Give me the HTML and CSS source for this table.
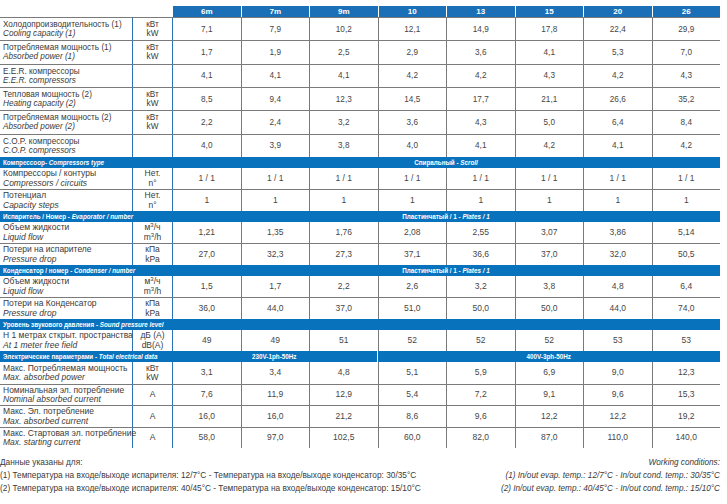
FILE: index.html
```html
<!DOCTYPE html>
<html lang="ru">
<head>
<meta charset="utf-8">
<title>Технические характеристики</title>
<link rel="stylesheet" href="styles.css">
</head>
<body>
<div class="page">
<table class="spec">
<colgroup>
<col class="c-label"><col class="c-unit">
<col class="c-val"><col class="c-val"><col class="c-val"><col class="c-val"><col class="c-val"><col class="c-val"><col class="c-val"><col class="c-val">
</colgroup>
<thead>
<tr class="head"><th class="blank"></th><th class="blank"></th><th>6m</th><th>7m</th><th>9m</th><th>10</th><th>13</th><th>15</th><th>20</th><th>26</th></tr>
</thead>
<tbody>
<tr class="big"><td class="lbl">Холодопроизводительность (1)<i>Cooling capacity (1)</i></td><td class="unit">кВт<br>kW</td><td>7,1</td><td>7,9</td><td>10,2</td><td>12,1</td><td>14,9</td><td>17,8</td><td>22,4</td><td>29,9</td></tr>
<tr class="big"><td class="lbl">Потребляемая мощность (1)<i>Absorbed power (1)</i></td><td class="unit">кВт<br>kW</td><td>1,7</td><td>1,9</td><td>2,5</td><td>2,9</td><td>3,6</td><td>4,1</td><td>5,3</td><td>7,0</td></tr>
<tr class="big"><td class="lbl">E.E.R. компрессоры<i>E.E.R. compressors</i></td><td class="unit"></td><td>4,1</td><td>4,1</td><td>4,1</td><td>4,2</td><td>4,2</td><td>4,3</td><td>4,2</td><td>4,3</td></tr>
<tr class="big"><td class="lbl">Тепловая мощность (2)<i>Heating capacity (2)</i></td><td class="unit">кВт<br>kW</td><td>8,5</td><td>9,4</td><td>12,3</td><td>14,5</td><td>17,7</td><td>21,1</td><td>26,6</td><td>35,2</td></tr>
<tr class="big"><td class="lbl">Потребляемая мощность (2)<i>Absorbed power (2)</i></td><td class="unit">кВт<br>kW</td><td>2,2</td><td>2,4</td><td>3,2</td><td>3,6</td><td>4,3</td><td>5,0</td><td>6,4</td><td>8,4</td></tr>
<tr class="big"><td class="lbl">C.O.P. компрессоры<i>C.O.P. compressors</i></td><td class="unit"></td><td>4,0</td><td>3,9</td><td>3,8</td><td>4,0</td><td>4,1</td><td>4,2</td><td>4,1</td><td>4,2</td></tr>

<tr class="sect"><td colspan="2">Компрессоор- <i>Compressors type</i></td><td colspan="8" class="mid">Спиральный - <i>Scroll</i></td></tr>
<tr><td class="lbl">Компрессоры / контуры<i>Compressors / circuits</i></td><td class="unit">Нет.<br>n°</td><td>1 / 1</td><td>1 / 1</td><td>1 / 1</td><td>1 / 1</td><td>1 / 1</td><td>1 / 1</td><td>1 / 1</td><td>1 / 1</td></tr>
<tr><td class="lbl">Потенциал<i>Capacity steps</i></td><td class="unit">Нет.<br>n°</td><td>1</td><td>1</td><td>1</td><td>1</td><td>1</td><td>1</td><td>1</td><td>1</td></tr>

<tr class="sect"><td colspan="2">Испаритель / Номер - <i>Evaporator / number</i></td><td colspan="8" class="mid">Пластинчатый / 1 - <i>Plates / 1</i></td></tr>
<tr><td class="lbl">Объем жидкости<i>Liquid flow</i></td><td class="unit">м<sup>3</sup>/ч<br>m<sup>3</sup>/h</td><td>1,21</td><td>1,35</td><td>1,76</td><td>2,08</td><td>2,55</td><td>3,07</td><td>3,86</td><td>5,14</td></tr>
<tr><td class="lbl">Потери на испарителе<i>Pressure drop</i></td><td class="unit">кПа<br>kPa</td><td>27,0</td><td>32,3</td><td>27,3</td><td>37,1</td><td>36,6</td><td>37,0</td><td>32,0</td><td>50,5</td></tr>

<tr class="sect"><td colspan="2">Конденсатор / номер - <i>Condenser / number</i></td><td colspan="8" class="mid">Пластинчатый / 1 - <i>Plates / 1</i></td></tr>
<tr><td class="lbl">Объем жидкости<i>Liquid flow</i></td><td class="unit">м<sup>3</sup>/ч<br>m<sup>3</sup>/h</td><td>1,5</td><td>1,7</td><td>2,2</td><td>2,6</td><td>3,2</td><td>3,8</td><td>4,8</td><td>6,4</td></tr>
<tr><td class="lbl">Потери на Конденсатор<i>Pressure drop</i></td><td class="unit">кПа<br>kPa</td><td>36,0</td><td>44,0</td><td>37,0</td><td>51,0</td><td>50,0</td><td>50,0</td><td>44,0</td><td>74,0</td></tr>

<tr class="sect"><td colspan="10">Уровень звукового давления - <i>Sound pressure level</i></td></tr>
<tr><td class="lbl">Н 1 метрах сткрыт. пространства<i>At 1 meter free field</i></td><td class="unit">дБ (А)<br>dB(A)</td><td>49</td><td>49</td><td>51</td><td>52</td><td>52</td><td>52</td><td>53</td><td>53</td></tr>

<tr class="sect"><td colspan="2">Электрические параметрами - <i>Total electrical data</i></td><td colspan="3" class="mid split">230V-1ph-50Hz</td><td colspan="5" class="mid">400V-3ph-50Hz</td></tr>
<tr><td class="lbl">Макс. Потребляемая мощность<i>Max. absorbed power</i></td><td class="unit">кВт<br>kW</td><td>3,1</td><td>3,4</td><td>4,8</td><td>5,1</td><td>5,9</td><td>6,9</td><td>9,0</td><td>12,3</td></tr>
<tr><td class="lbl">Номинальная эл. потребление<i>Nominal absorbed current</i></td><td class="unit">A</td><td>7,6</td><td>11,9</td><td>12,9</td><td>5,4</td><td>7,2</td><td>9,1</td><td>9,6</td><td>15,3</td></tr>
<tr><td class="lbl">Макс. Эл. потребление<i>Max. absorbed current</i></td><td class="unit">A</td><td>16,0</td><td>16,0</td><td>21,2</td><td>8,6</td><td>9,6</td><td>12,2</td><td>12,2</td><td>19,2</td></tr>
<tr><td class="lbl">Макс. Стартовая эл. потребление<i>Max. starting current</i></td><td class="unit">A</td><td>58,0</td><td>97,0</td><td>102,5</td><td>60,0</td><td>82,0</td><td>87,0</td><td>110,0</td><td>140,0</td></tr>
</tbody>
</table>

<div class="notes">
<div class="notes-ru">
<p>Данные указаны для:</p>
<p>(1) Температура на входе/выходе испарителя: 12/7°C - Температура на входе/выходе конденсатор: 30/35°C</p>
<p>(2) Температура на входе/выходе испарителя: 40/45°C - Температура на входе/выходе конденсатор: 15/10°C</p>
</div>
<div class="notes-en">
<p>Working conditions:</p>
<p>(1) In/out evap. temp.: 12/7°C - In/out cond. temp.: 30/35°C</p>
<p>(2) In/out evap. temp.: 40/45°C - In/out cond. temp.: 15/10°C</p>
</div>
</div>
</div>
</body>
</html>
```
FILE: styles.css
```css
html, body {
  margin: 0;
  padding: 0;
  background: #ffffff;
}

.page {
  width: 720px;
  padding-top: 6px;
  font-family: "Liberation Sans", Arial, sans-serif;
  color: #3a3a3a;
}

.spec {
  width: 720px;
  table-layout: fixed;
  border-collapse: separate;
  border-spacing: 0;
  font-size: 8.5px;
}

.c-label { width: 132px; }
.c-unit { width: 40px; }
.c-val { width: 68.5px; }

.spec th,
.spec td {
  padding: 0;
  vertical-align: middle;
}

.head {
  height: 11px;
}

.head th {
  background: #1b6fb7;
  color: #ffffff;
  font-weight: bold;
  font-size: 8px;
  line-height: 11px;
  text-align: center;
  border-left: 1px solid #ffffff;
}

.head th.blank {
  background: transparent;
  border-left: 0;
}

.spec tbody td {
  border-top: 1px solid #7a7a7a;
  border-left: 1px solid #7a7a7a;
  text-align: center;
  color: #464646;
  line-height: 9.5px;
}

.spec tbody tr {
  height: 21.5px;
}

.spec tbody tr.big {
  height: 23.33px;
  font-size: 8.2px;
}

.spec tbody tr.big td {
  line-height: 9px;
}

.spec tbody td.lbl {
  border-left: 0;
  text-align: left;
  padding-left: 3px;
  color: #3a3a3a;
  white-space: nowrap;
}

.spec tbody td.lbl i {
  display: block;
}

.spec tbody td.unit {
  border-left: 1px solid #2b72b6;
  color: #3a3a3a;
  white-space: nowrap;
}

.spec tbody td.unit + td {
  border-left: 1px solid #2b72b6;
}

.spec sup {
  font-size: 6px;
  line-height: 0;
  vertical-align: 3px;
}

.spec tbody tr.sect {
  height: 11px;
}

.spec tbody tr.sect td {
  background: #0872bd;
  color: #ffffff;
  border: 0;
  font-size: 6.3px;
  font-weight: bold;
  line-height: 11px;
  text-align: left;
  padding-left: 3px;
  white-space: nowrap;
}

.spec tbody tr.sect td.mid {
  text-align: center;
  padding-left: 0;
}

.spec tbody tr.sect td.split {
  border-right: 1px solid #ffffff;
}

.spec tbody tr.sect + tr td {
  border-top: 0;
}

.notes {
  display: flex;
  justify-content: space-between;
  margin-top: 8px;
  font-size: 8.3px;
  line-height: 13px;
}

.notes p {
  margin: 0;
}

.notes-ru {
  color: #3a3a3a;
}

.notes-en {
  text-align: right;
  font-style: italic;
  font-size: 8.2px;
  color: #3a3a3a;
}
```
